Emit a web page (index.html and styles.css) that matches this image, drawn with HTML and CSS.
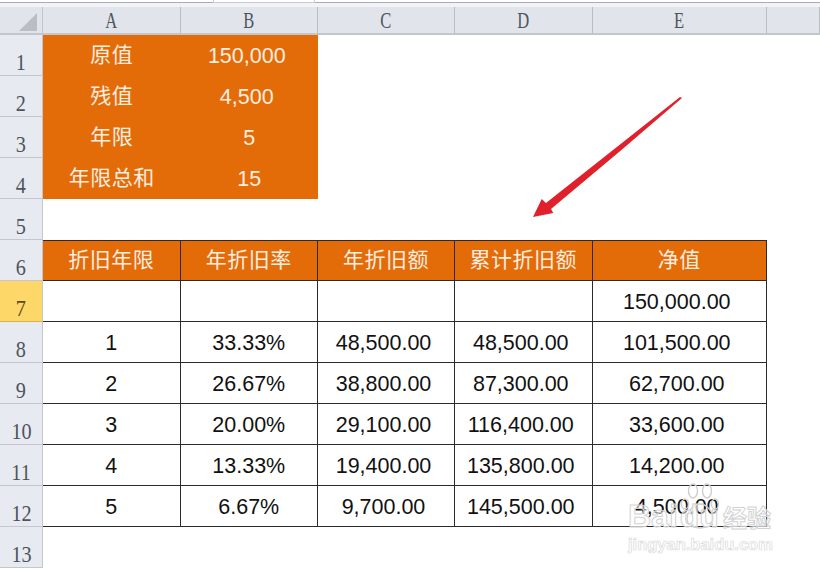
FILE: index.html
```html
<!DOCTYPE html>
<html lang="zh-CN">
<head>
<meta charset="utf-8">
<title>年限总和法折旧表</title>
<link rel="stylesheet" href="styles.css">
</head>
<body>
<div class="topbar"><div class="tab"></div></div>
<div class="sheet">
  <div class="corner"><svg class="corner-mark" width="20" height="20" viewBox="0 0 20 20"><polygon points="19,1 19,19 1,19" fill="#b9bec5"/></svg></div>
  <div class="col"><span>A</span></div><div class="col"><span>B</span></div><div class="col"><span>C</span></div><div class="col"><span>D</span></div><div class="col"><span>E</span></div><div class="col"></div>

  <div class="row"><span>1</span></div><div class="cell fill">原值</div><div class="cell fill num">150,000</div><div class="blank"></div>
  <div class="row"><span>2</span></div><div class="cell fill">残值</div><div class="cell fill num">4,500</div><div class="blank"></div>
  <div class="row"><span>3</span></div><div class="cell fill">年限</div><div class="cell fill digit">5</div><div class="blank"></div>
  <div class="row"><span>4</span></div><div class="cell fill">年限总和</div><div class="cell fill digit">15</div><div class="blank"></div>
  <div class="row"><span>5</span></div><div class="empty"></div>

  <div class="row"><span>6</span></div><div class="cell fill line top">折旧年限</div><div class="cell fill line top">年折旧率</div><div class="cell fill line top">年折旧额</div><div class="cell fill line top">累计折旧额</div><div class="cell fill line top">净值</div><div></div>
  <div class="row active"><span>7</span></div><div class="cell line"></div><div class="cell line"></div><div class="cell line"></div><div class="cell line"></div><div class="cell line num">150,000.00</div><div></div>
  <div class="row"><span>8</span></div><div class="cell line">1</div><div class="cell line">33.33%</div><div class="cell line num">48,500.00</div><div class="cell line num">48,500.00</div><div class="cell line num">101,500.00</div><div></div>
  <div class="row"><span>9</span></div><div class="cell line">2</div><div class="cell line">26.67%</div><div class="cell line num">38,800.00</div><div class="cell line num">87,300.00</div><div class="cell line num">62,700.00</div><div></div>
  <div class="row"><span>10</span></div><div class="cell line">3</div><div class="cell line">20.00%</div><div class="cell line num">29,100.00</div><div class="cell line num">116,400.00</div><div class="cell line num">33,600.00</div><div></div>
  <div class="row"><span>11</span></div><div class="cell line">4</div><div class="cell line">13.33%</div><div class="cell line num">19,400.00</div><div class="cell line num">135,800.00</div><div class="cell line num">14,200.00</div><div></div>
  <div class="row"><span>12</span></div><div class="cell line">5</div><div class="cell line">6.67%</div><div class="cell line num">9,700.00</div><div class="cell line num">145,500.00</div><div class="cell line num">4,500.00</div><div></div>
  <div class="row"><span>13</span></div><div class="empty"></div>
</div>

<svg class="arrow" width="160" height="130" viewBox="530 95 160 130">
  <polygon points="682,98 622,149.5 551,209 553.3,213 533,217 541.7,199 546,203 620,144.5 680,97" fill="#e0212b"/>
</svg>

<div class="mark">
  <svg class="paw" width="40" height="48" viewBox="0 0 40 48">
    <g fill="none" stroke="#cfcfcf" stroke-width="1.4">
      <ellipse cx="13" cy="9" rx="4.5" ry="7"/>
      <ellipse cx="27" cy="9" rx="4.5" ry="7"/>
      <ellipse cx="5" cy="22" rx="3.5" ry="5"/>
      <ellipse cx="35" cy="22" rx="3.5" ry="5"/>
      <path d="M20 22c-7 0-13 8-13 15 0 6 6 9 13 9s13-3 13-9c0-7-6-15-13-15z"/>
    </g>
  </svg>
  <div class="mark-logo"><span>Bai</span><span class="mark-du">du</span><span class="mark-cn">经验</span></div>
  <div class="mark-url">jingyan.baidu.com</div>
</div>
</body>
</html>
```

FILE: styles.css
```css
* { box-sizing: border-box; }
html, body { margin: 0; padding: 0; }
body {
  position: relative;
  width: 820px;
  height: 570px;
  overflow: hidden;
  background: #fff;
  font-family: "Liberation Sans", "Noto Sans CJK SC", sans-serif;
}
.topbar {
  height: 7px;
  background: #f1f3f6;
  border-top: 2px solid #fff;
  box-shadow: inset 0 1px 0 #a9adb4;
  position: relative;
}
.tab {
  position: absolute;
  left: 213px;
  top: -2px;
  width: 102px;
  height: 3px;
  background: #fff;
  border: 1px solid #c9ccd1;
  border-top: 0;
}
.sheet {
  display: grid;
  grid-template-columns: 43px 137.5px 137.5px 137px 137.5px 174.5px 53px;
  grid-template-rows: 28px repeat(13, 41px);
}
.corner, .col, .row {
  background: #e1e5eb;
  color: #4f545c;
  font-family: "Liberation Serif", "Noto Serif CJK SC", serif;
}
.corner {
  display: flex;
  align-items: flex-end;
  justify-content: flex-end;
  padding: 0 4px 1px 0;
  border-right: 1px solid #c3c7cd;
  border-bottom: 2px solid #c3c7cd;
}
.corner-mark { display: block; }
.col {
  display: flex;
  align-items: center;
  justify-content: center;
  padding-top: 2px;
  font-size: 23px;
  border-right: 1px solid #b9bdc4;
  border-bottom: 2px solid #c3c7cd;
}
.col span {
  display: inline-block;
  transform: scaleX(0.72);
}
.row {
  display: flex;
  align-items: flex-end;
  justify-content: center;
  font-size: 23px;
  line-height: 25px;
  background: #e7ebf1;
  border-right: 1px solid #c3c7cd;
  border-bottom: 1px solid #c3c7cd;
}
.row span {
  display: inline-block;
  transform: scaleX(0.88);
}
.row.active {
  background: #fdd767;
  color: #5b4a20;
  border-bottom-color: #d8b347;
}
.cell {
  display: flex;
  align-items: center;
  justify-content: center;
  padding-top: 3px;
  font-size: 21.5px;
  color: #111;
  white-space: nowrap;
}
.fill {
  background: #e36c09;
  color: #fbeee0;
  font-size: 21px;
  letter-spacing: 0.5px;
  padding-top: 0;
  padding-bottom: 6px;
}
.fill.num, .fill.digit {
  font-size: 21.5px;
  letter-spacing: 0;
  padding-bottom: 0;
  padding-top: 1px;
}
.num { padding-right: 5px; }
.line {
  border-right: 1px solid #2b2b2b;
  border-bottom: 1px solid #2b2b2b;
}
.top { border-top: 1px solid #2b2b2b; }
.blank { grid-column: span 4; }
.empty { grid-column: span 6; }
.arrow {
  position: absolute;
  left: 530px;
  top: 95px;
}
.mark {
  position: absolute;
  left: 626px;
  top: 482px;
  width: 150px;
  height: 72px;
}
.paw {
  position: absolute;
  left: 54px;
  top: 0;
}
.mark-logo {
  position: absolute;
  left: 2px;
  top: 16px;
  display: flex;
  align-items: baseline;
  font-size: 32px;
  font-weight: 700;
  line-height: 36px;
  color: rgba(255, 255, 255, 0.55);
  -webkit-text-stroke: 1px #d2d2d2;
}
.mark-du { margin-left: 2px; }
.mark-cn {
  margin-left: 4px;
  font-size: 24px;
}
.mark-url {
  position: absolute;
  left: 2px;
  top: 52px;
  font-size: 16.5px;
  line-height: 20px;
  font-weight: 700;
  color: rgba(255, 255, 255, 0.7);
  -webkit-text-stroke: 0.7px #dadada;
}
```
